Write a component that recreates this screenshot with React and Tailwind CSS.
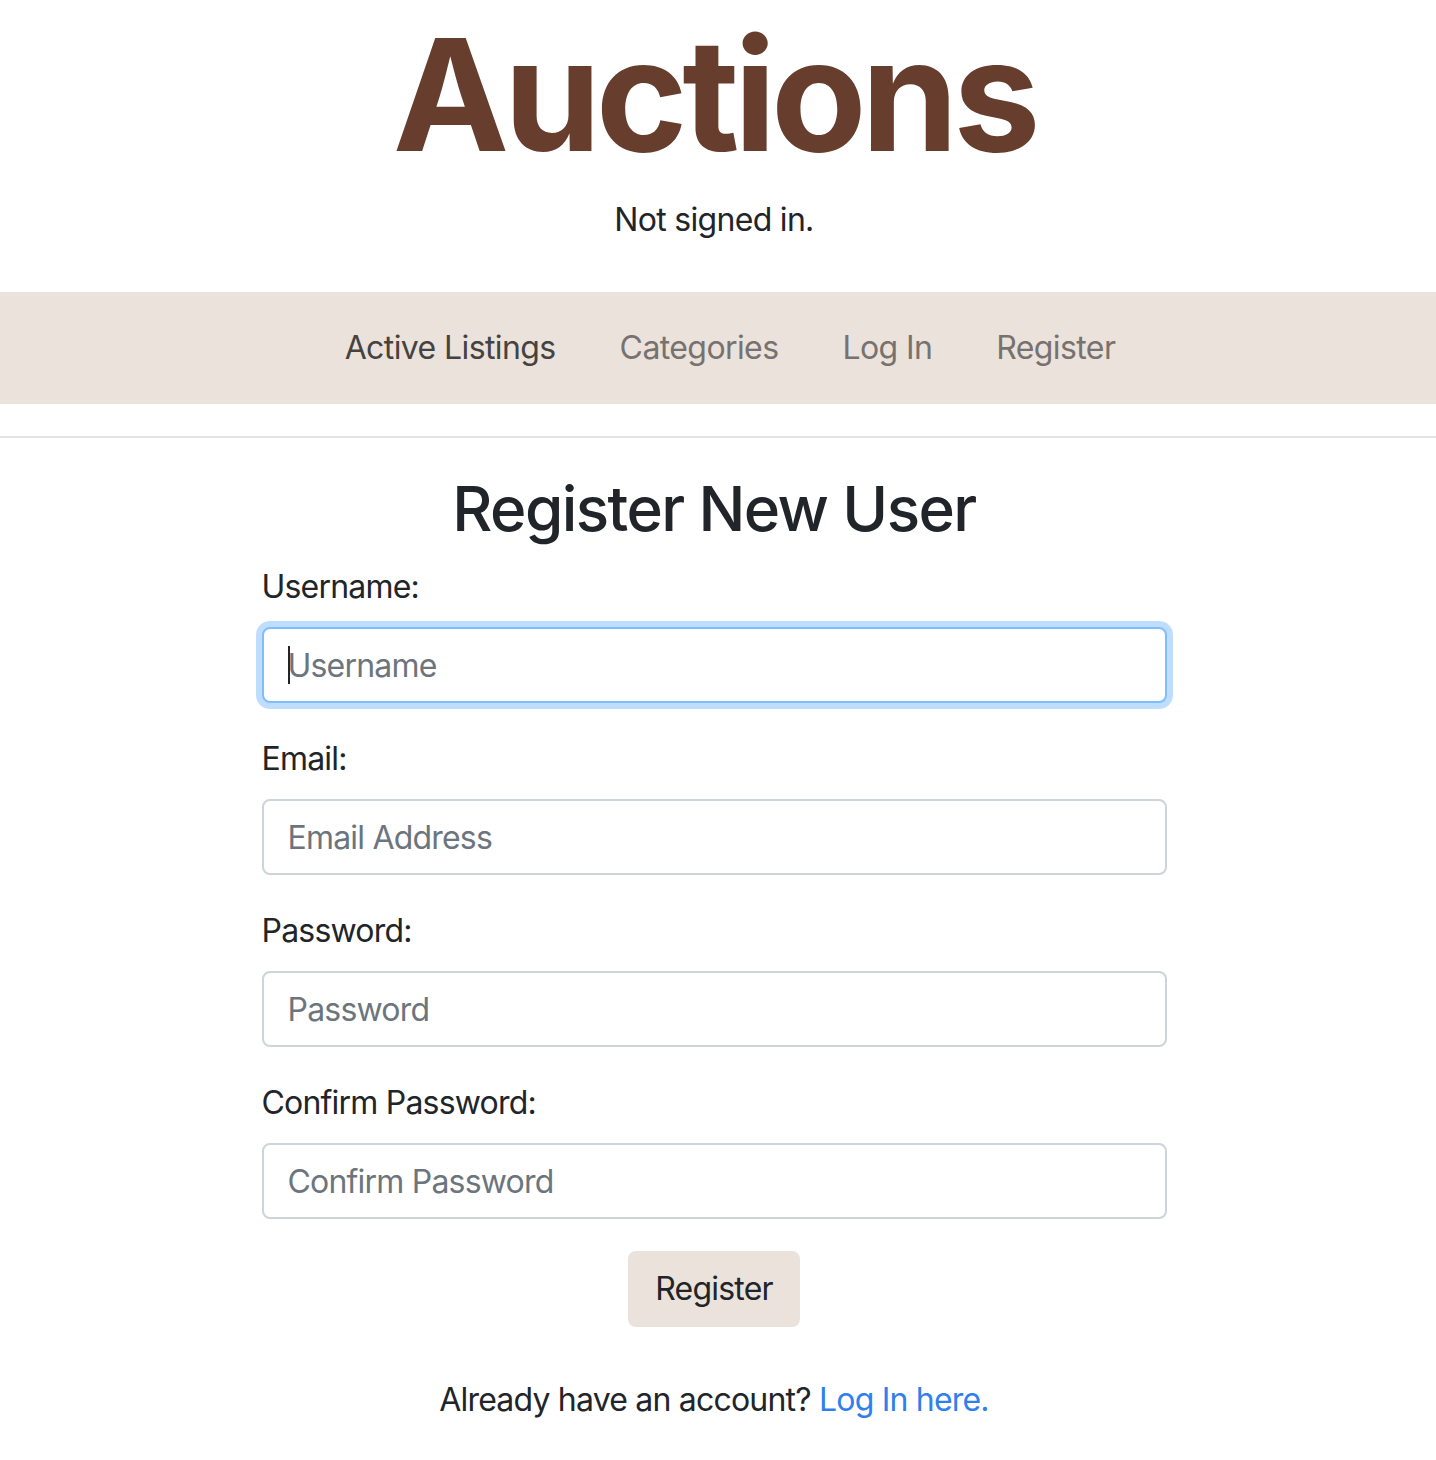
import React from 'react';

const fields = [
  { label: 'Username:', placeholder: 'Username', type: 'text', focused: true },
  { label: 'Email:', placeholder: 'Email Address', type: 'email' },
  { label: 'Password:', placeholder: 'Password', type: 'password' },
  { label: 'Confirm Password:', placeholder: 'Confirm Password', type: 'password' },
];

const navLinks = [
  { label: 'Active Listings', active: true },
  { label: 'Categories' },
  { label: 'Log In' },
  { label: 'Register' },
];

const FormField = ({ label, placeholder, type, focused }) => (
  <div className="mb-[32px]">
    <label className="block mb-[16px] text-[32px] leading-[48px] tracking-[-0.8px] text-[#212529]">{label}</label>
    <div className="relative">
      <input
        type={type}
        placeholder={placeholder}
        className={
          'block w-full h-[76px] px-[24px] text-[32px] tracking-[-0.8px] text-[#495057] bg-white rounded-[8px] border-2 outline-none placeholder:text-[#6c757d] ' +
          (focused
            ? 'border-[#80bdff] shadow-[0_0_0_6px_rgba(0,123,255,0.25)]'
            : 'border-[#ced4da]')
        }
      />
      {/* Caret */}
      {focused && (
        <span className="absolute left-[26px] top-[19px] w-[2px] h-[38px] bg-[#212529]" />
      )}
    </div>
  </div>
);

export default function App() {
  return (
    <div className="w-[1436px] min-h-[1460px] bg-white font-['Inter','Liberation_Sans',sans-serif] text-[#212529]">
      {/* Header */}
      <div className="w-[1428px] flex flex-col items-center">
        <h1 className="px-[20px] text-[156px] leading-[190px] font-bold tracking-[-5.3px] text-[#673e2d]">Auctions</h1>
        <div className="mt-[6px] text-[32px] leading-[48px] tracking-[-0.7px]">Not signed in.</div>
      </div>

      {/* Nav */}
      <nav className="mt-[48px] h-[112px] bg-[#ebe2dc]">
        <ul className="w-[1428px] h-full flex items-center justify-center pl-[32px]">
          {navLinks.map((link) => (
            <li key={link.label}>
              <a
                href="#"
                className={
                  'block px-[32px] text-[32px] leading-[48px] tracking-[-0.6px] ' +
                  (link.active ? 'text-[#46423f]' : 'text-[#77726f]')
                }
              >
                {link.label}
              </a>
            </li>
          ))}
        </ul>
      </nav>

      <hr className="mt-[32px] mb-[32px] border-t-2 border-[#e3e3e3]" />

      {/* Register form */}
      <div className="w-[1428px] flex flex-col items-center">
        <h2 className="text-[62px] leading-[77px] font-medium tracking-[-1.6px] mb-[16px]">Register New User</h2>
        <form className="w-[905px]">
          {fields.map((f) => (
            <FormField key={f.label} {...f} />
          ))}
          <div className="flex justify-center">
            <button
              type="button"
              className="h-[76px] px-[27px] rounded-[8px] bg-[#ebe2dc] text-[32px] tracking-[-0.8px] text-[#212529]"
            >
              Register
            </button>
          </div>
        </form>
        <p className="mt-[49px] text-[32px] leading-[48px] tracking-[-0.8px]">
          Already have an account? <a href="#" className="text-[#2f80ed]">Log In here.</a>
        </p>
      </div>
    </div>
  );
}
